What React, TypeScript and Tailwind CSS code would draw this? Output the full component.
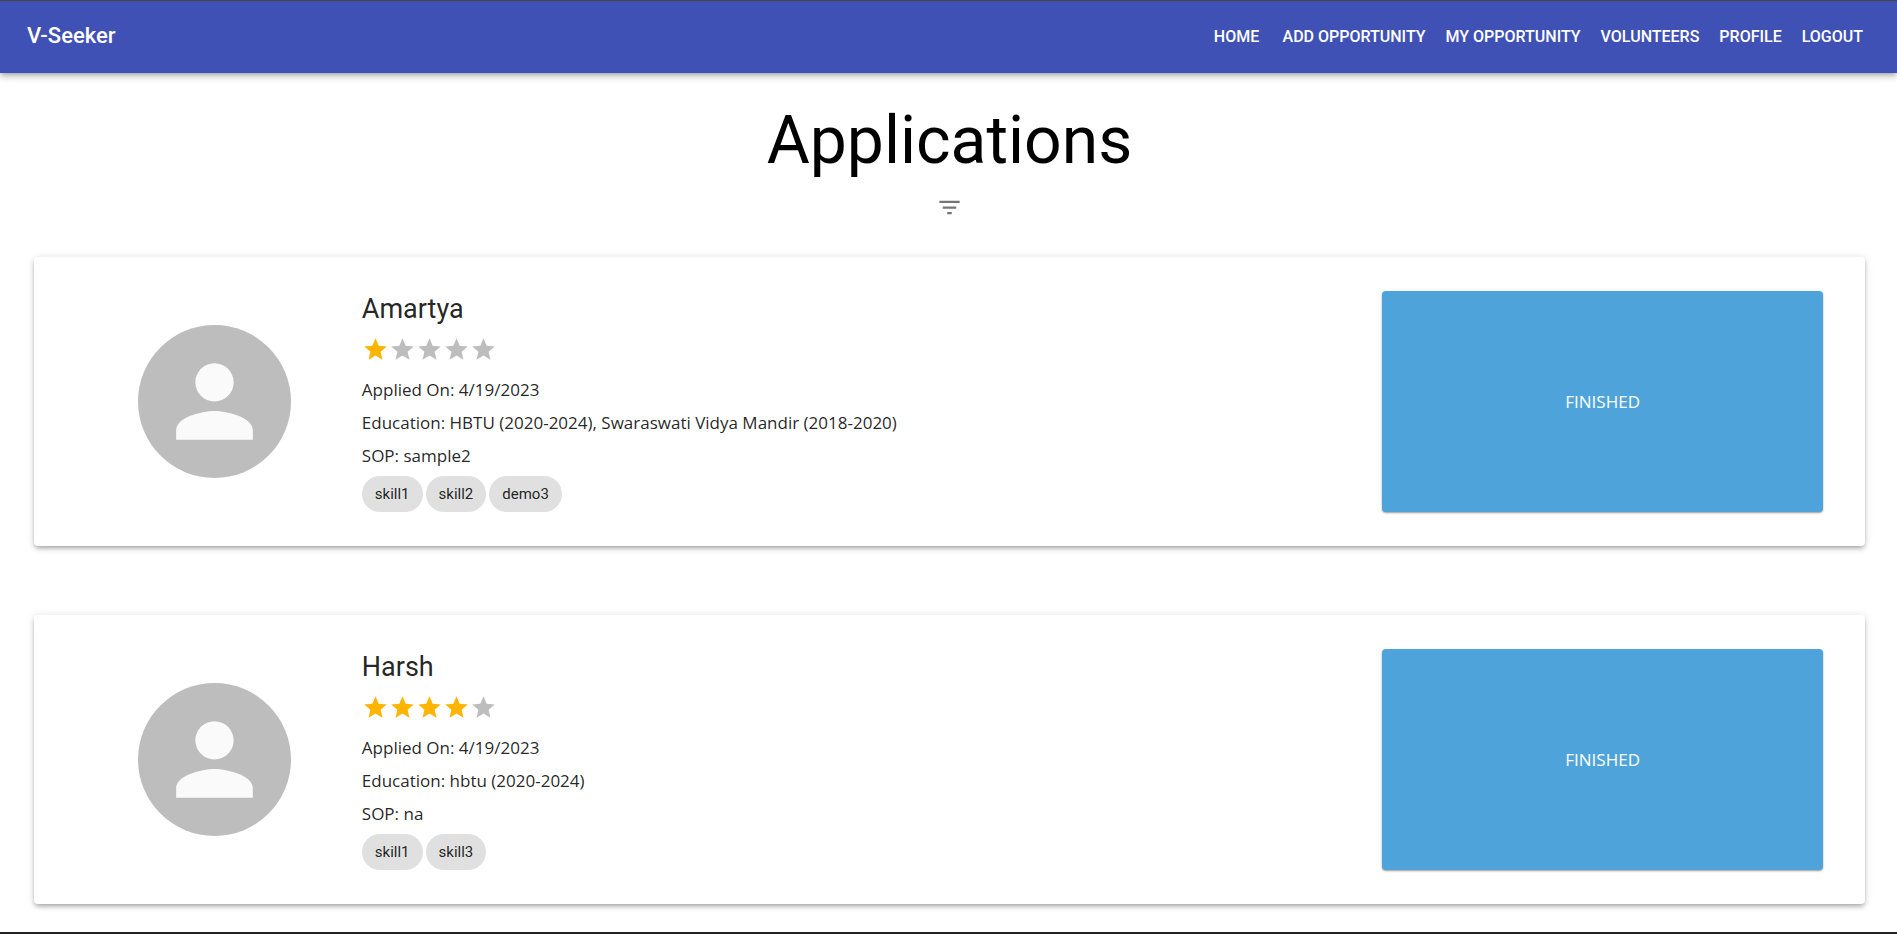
import React from 'react';
import { MdFilterList, MdPerson, MdStar } from 'react-icons/md';

const navLinks = ['Home', 'Add Opportunity', 'My Opportunity', 'Volunteers', 'Profile', 'Logout'];

interface Application {
  name: string;
  rating: number;
  appliedOn: string;
  education: string;
  sop: string;
  skills: string[];
  status: string;
}

const applications: Application[] = [
  {
    name: 'Amartya',
    rating: 1,
    appliedOn: '4/19/2023',
    education: 'HBTU (2020-2024), Swaraswati Vidya Mandir (2018-2020)',
    sop: 'sample2',
    skills: ['skill1', 'skill2', 'demo3'],
    status: 'Finished',
  },
  {
    name: 'Harsh',
    rating: 4,
    appliedOn: '4/19/2023',
    education: 'hbtu (2020-2024)',
    sop: 'na',
    skills: ['skill1', 'skill3'],
    status: 'Finished',
  },
];

function NavBar() {
  return (
    <header className="flex h-[73px] items-center justify-between border-t border-[#444444] bg-[#3f51b5] pr-6 pl-[27px] text-white shadow-[0_2px_4px_-1px_rgba(0,0,0,0.2),0_4px_6px_0_rgba(0,0,0,0.14),0_1px_11px_0_rgba(0,0,0,0.12)]">
      <span className="pb-0.5 text-[22px] leading-8 font-medium">V-Seeker</span>
      <nav className="flex">
        {navLinks.map((label) => (
          <a
            key={label}
            href="#"
            className="min-w-[72px] px-[10px] py-2 text-center text-[16px] leading-7 font-medium uppercase"
          >
            {label}
          </a>
        ))}
      </nav>
    </header>
  );
}

function Rating({ value }: { value: number }) {
  return (
    <div role="img" aria-label={`${value} Stars`} className="mb-0.5 flex h-11 items-center">
      {[1, 2, 3, 4, 5].map((n) => (
        <MdStar key={n} size={27} className={n <= value ? 'text-[#ffb400]' : 'text-[#bdbdbd]'} />
      ))}
    </div>
  );
}

function ApplicationCard({ application }: { application: Application }) {
  return (
    <article className="grid grid-cols-12 rounded bg-white p-[34px] shadow-[0_3px_4px_-2px_rgba(0,0,0,0.2),0_3px_5px_0_rgba(0,0,0,0.14),0_1px_9px_0_rgba(0,0,0,0.12)]">
      <div className="col-span-2 flex items-center justify-center">
        <div className="flex size-[153px] items-center justify-center rounded-full bg-[#bdbdbd] text-[#fafafa]">
          <MdPerson size={115} />
        </div>
      </div>
      <div className="col-span-7 font-['Open_Sans',sans-serif] text-[17px] leading-[33px] text-black/87">
        <h2 className="font-[Roboto,sans-serif] text-[27px] leading-9">{application.name}</h2>
        <Rating value={application.rating} />
        <p>Applied On: {application.appliedOn}</p>
        <p>Education: {application.education}</p>
        <p>SOP: {application.sop}</p>
        <ul className="mt-1 flex gap-[3px] font-[Roboto,sans-serif] text-[15px] leading-9">
          {application.skills.map((skill) => (
            <li key={skill} className="rounded-full bg-[#e0e0e0] px-[13px]">
              {skill}
            </li>
          ))}
        </ul>
      </div>
      <div className="col-span-3 mr-2 -ml-2 flex items-center justify-center rounded bg-[#4ea4da] font-['Open_Sans',sans-serif] text-[17px] text-white uppercase shadow-[0_1px_2px_0_rgba(0,0,0,0.4)]">
        {application.status}
      </div>
    </article>
  );
}

export default function App() {
  return (
    <div className="flex min-h-screen flex-col border-b-2 border-[#222222] bg-white font-[Roboto,sans-serif]">
      <NavBar />
      <main className="grow pt-7 pr-8 pb-7 pl-[34px]">
        <div className="flex flex-col items-center">
          <h1 className="text-[66px] leading-[80px] text-black">Applications</h1>
          <button type="button" aria-label="Filter" className="rounded-full p-[13px] text-black/54">
            <MdFilterList size={27} />
          </button>
        </div>
        <div className="mt-[23px] flex flex-col gap-[69px]">
          {applications.map((application) => (
            <ApplicationCard key={application.name} application={application} />
          ))}
        </div>
      </main>
    </div>
  );
}
